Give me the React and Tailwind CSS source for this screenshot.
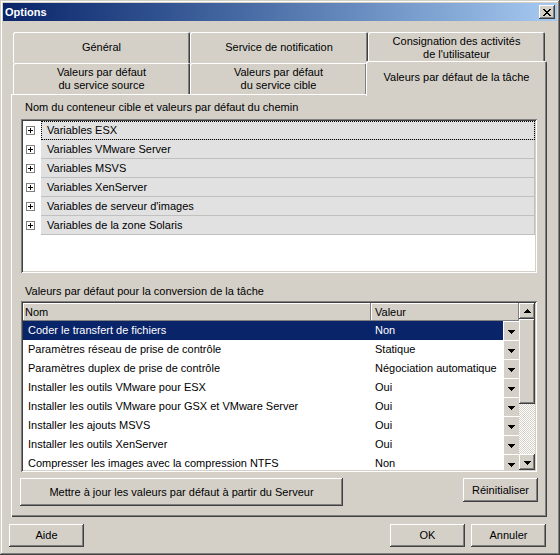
import React from "react";

const raised =
  "shadow-[inset_-1px_-1px_#404040,inset_1px_1px_#ffffff,inset_-2px_-2px_#808080,inset_2px_2px_#d4d0c8]";
const sunken =
  "shadow-[inset_1px_1px_#808080,inset_-1px_-1px_#ffffff,inset_2px_2px_#404040,inset_-2px_-2px_#d4d0c8]";
const tabShadow =
  "shadow-[inset_1px_1px_#ffffff,inset_-1px_0_#404040,inset_-2px_0_#808080]";

function Down() {
  return (
    <svg width="7" height="4" viewBox="0 0 7 4" shapeRendering="crispEdges">
      <path d="M0 0h7v1H0z M1 1h5v1H1z M2 2h3v1H2z M3 3h1v1H3z" fill="#000" />
    </svg>
  );
}

function Up() {
  return (
    <svg width="7" height="4" viewBox="0 0 7 4" shapeRendering="crispEdges">
      <path d="M3 0h1v1H3z M2 1h3v1H2z M1 2h5v1H1z M0 3h7v1H0z" fill="#000" />
    </svg>
  );
}

function CloseX() {
  return (
    <svg width="8" height="7" viewBox="0 0 8 7" shapeRendering="crispEdges">
      <path
        d="M0 0h2v1H0z M6 0h2v1H6z M1 1h2v1H1z M5 1h2v1H5z M2 2h4v1H2z M3 3h2v1H3z M2 4h4v1H2z M1 5h2v1H1z M5 5h2v1H5z M0 6h2v1H0z M6 6h2v1H6z"
        fill="#000"
      />
    </svg>
  );
}

function Plus() {
  return (
    <svg width="9" height="9" viewBox="0 0 9 9" shapeRendering="crispEdges">
      <rect x="0.5" y="0.5" width="8" height="8" fill="#fff" stroke="#808080" strokeWidth="1" />
      <path d="M2 4h5v1H2z M4 2h1v5H4z" fill="#000" />
    </svg>
  );
}

const treeItems = [
  "Variables ESX",
  "Variables VMware Server",
  "Variables MSVS",
  "Variables XenServer",
  "Variables de serveur d'images",
  "Variables de la zone Solaris",
];

const rows = [
  ["Coder le transfert de fichiers", "Non"],
  ["Paramètres réseau de prise de contrôle", "Statique"],
  ["Paramètres duplex de prise de contrôle", "Négociation automatique"],
  ["Installer les outils VMware pour ESX", "Oui"],
  ["Installer les outils VMware pour GSX et VMware Server", "Oui"],
  ["Installer les ajouts MSVS", "Oui"],
  ["Installer les outils XenServer", "Oui"],
  ["Compresser les images avec la compression NTFS", "Non"],
];

export default function App() {
  return (
    <div className="w-[560px] h-[555px] bg-[#d4d0c8] p-[3px] flex flex-col font-['Liberation_Sans',Arial,sans-serif] text-[11px] leading-[13px] text-black select-none shadow-[inset_-1px_-1px_#404040,inset_1px_1px_#d4d0c8,inset_-2px_-2px_#808080,inset_2px_2px_#ffffff]">
      {/* Title bar */}
      <div className="h-[18px] flex items-center justify-between bg-linear-to-r from-[#0a246a] to-[#a6caf0] pl-[2px] pr-[2px]">
        <span className="text-white font-bold text-[11px]">Options</span>
        <div className={`w-[16px] h-[14px] bg-[#d4d0c8] flex items-center justify-center ${raised}`}>
          <CloseX />
        </div>
      </div>

      {/* Tabs + panel */}
      <div className="mt-[11px] ml-[8px] w-[536px] flex flex-col">
        <div className="flex h-[31px] pl-[2px]">
          <div className={`w-[177px] h-[31px] flex items-center justify-center text-center bg-[#d4d0c8] rounded-t-[2px] ${tabShadow}`}>
            Général
          </div>
          <div className={`w-[178px] h-[31px] flex items-center justify-center text-center bg-[#d4d0c8] rounded-t-[2px] ${tabShadow}`}>
            Service de notification
          </div>
          <div className={`w-[177px] h-[31px] flex items-center justify-center text-center bg-[#d4d0c8] rounded-t-[2px] ${tabShadow}`}>
            Consignation des activités
            <br />
            de l'utilisateur
          </div>
        </div>
        <div className="flex h-[31px] pl-[2px]">
          <div className={`w-[177px] h-[31px] flex items-center justify-center text-center bg-[#d4d0c8] rounded-t-[2px] ${tabShadow}`}>
            Valeurs par défaut
            <br />
            du service source
          </div>
          <div className={`w-[177px] h-[31px] flex items-center justify-center text-center bg-[#d4d0c8] rounded-t-[2px] ${tabShadow}`}>
            Valeurs par défaut
            <br />
            du service cible
          </div>
          <div className="relative z-10 -ml-[1px] -mt-[2px] w-[181px] h-[35px] pb-[2px] flex items-center justify-center text-center bg-[#d4d0c8] rounded-t-[2px] shadow-[inset_1px_1px_#ffffff,inset_-1px_0_#404040,inset_-2px_0_#808080]">
            Valeurs par défaut de la tâche
          </div>
        </div>

        {/* Panel */}
        <div className="h-[423px] px-[10px] pt-[6px] flex flex-col shadow-[inset_1px_1px_#ffffff,inset_-1px_-1px_#404040,inset_-2px_-2px_#808080]">
          <div className="h-[14px] leading-[14px] pl-[4px]">
            Nom du conteneur cible et valeurs par défaut du chemin
          </div>

          {/* Tree */}
          <div className={`mt-[5px] h-[154px] bg-white p-[2px] flex flex-col ${sunken}`}>
            {treeItems.map((t, i) => (
              <div key={t} className="flex h-[19px]">
                <div className="w-[18px] flex items-center pl-[3px]">
                  <Plus />
                </div>
                <div
                  className={`flex-1 bg-[#e1e1e1] border-b border-r border-[#c0c0c0] pl-[6px] flex items-center ${
                    i === 0 ? "outline-1 outline-dotted outline-black -outline-offset-1" : ""
                  }`}
                >
                  {t}
                </div>
              </div>
            ))}
          </div>

          <div className="mt-[11px] h-[14px] leading-[14px] pl-[4px]">
            Valeurs par défaut pour la conversion de la tâche
          </div>

          {/* Table */}
          <div className={`mt-[3px] h-[171px] bg-white p-[2px] flex ${sunken}`}>
            <div className="flex-1 flex flex-col min-w-0">
              <div className="h-[18px] flex">
                <div className="w-[348px] bg-[#d4d0c8] pl-[2px] flex items-center shadow-[inset_-1px_-1px_#808080,inset_1px_1px_#ffffff]">
                  Nom
                </div>
                <div className="flex-1 bg-[#d4d0c8] pl-[4px] flex items-center shadow-[inset_-1px_-1px_#808080,inset_1px_1px_#ffffff]">
                  Valeur
                </div>
              </div>
              <div className="flex-1 overflow-hidden flex flex-col">
                {rows.map(([n, v], i) => (
                  <div key={n} className="h-[19px] shrink-0 flex">
                    <div
                      className={`w-[348px] pl-[5px] flex items-center ${
                        i === 0 ? "bg-[#0a246a] text-white" : ""
                      }`}
                    >
                      {n}
                    </div>
                    <div
                      className={`w-[132px] pl-[4px] flex items-center ${
                        i === 0 ? "bg-[#0a246a] text-white" : ""
                      }`}
                    >
                      {v}
                    </div>
                    <div className="w-[16px] bg-[#d4d0c8] flex items-center justify-center pt-[2px] shadow-[inset_1px_1px_#ffffff]">
                      <Down />
                    </div>
                  </div>
                ))}
              </div>
            </div>
            {/* Scrollbar */}
            <div className="w-[16px] flex flex-col">
              <div className={`h-[16px] bg-[#d4d0c8] flex items-center justify-center ${raised}`}>
                <Up />
              </div>
              <div className={`h-[85px] bg-[#d4d0c8] ${raised}`} />
              <div className="flex-1 bg-[image:repeating-conic-gradient(#d4d0c8_0%_25%,#ffffff_0%_50%)] bg-[length:2px_2px]" />
              <div className={`h-[16px] bg-[#d4d0c8] flex items-center justify-center pt-[1px] ${raised}`}>
                <Down />
              </div>
            </div>
          </div>

          {/* Panel buttons */}
          <div className="mt-[6px] -mx-[1px] flex justify-between items-start">
            <div className={`w-[323px] h-[28px] bg-[#d4d0c8] flex items-center justify-center ${raised}`}>
              Mettre à jour les valeurs par défaut à partir du Serveur
            </div>
            <div className={`w-[75px] h-[24px] bg-[#d4d0c8] flex items-center justify-center ${raised}`}>
              Réinitialiser
            </div>
          </div>
        </div>
      </div>

      {/* Dialog buttons */}
      <div className="mt-[7px] flex items-start">
        <div className={`ml-[6px] w-[75px] h-[23px] bg-[#d4d0c8] flex items-center justify-center ${raised}`}>
          Aide
        </div>
        <div className={`ml-auto w-[75px] h-[23px] bg-[#d4d0c8] flex items-center justify-center ${raised}`}>
          OK
        </div>
        <div className={`ml-[6px] mr-[11px] w-[75px] h-[23px] bg-[#d4d0c8] flex items-center justify-center ${raised}`}>
          Annuler
        </div>
      </div>
    </div>
  );
}
